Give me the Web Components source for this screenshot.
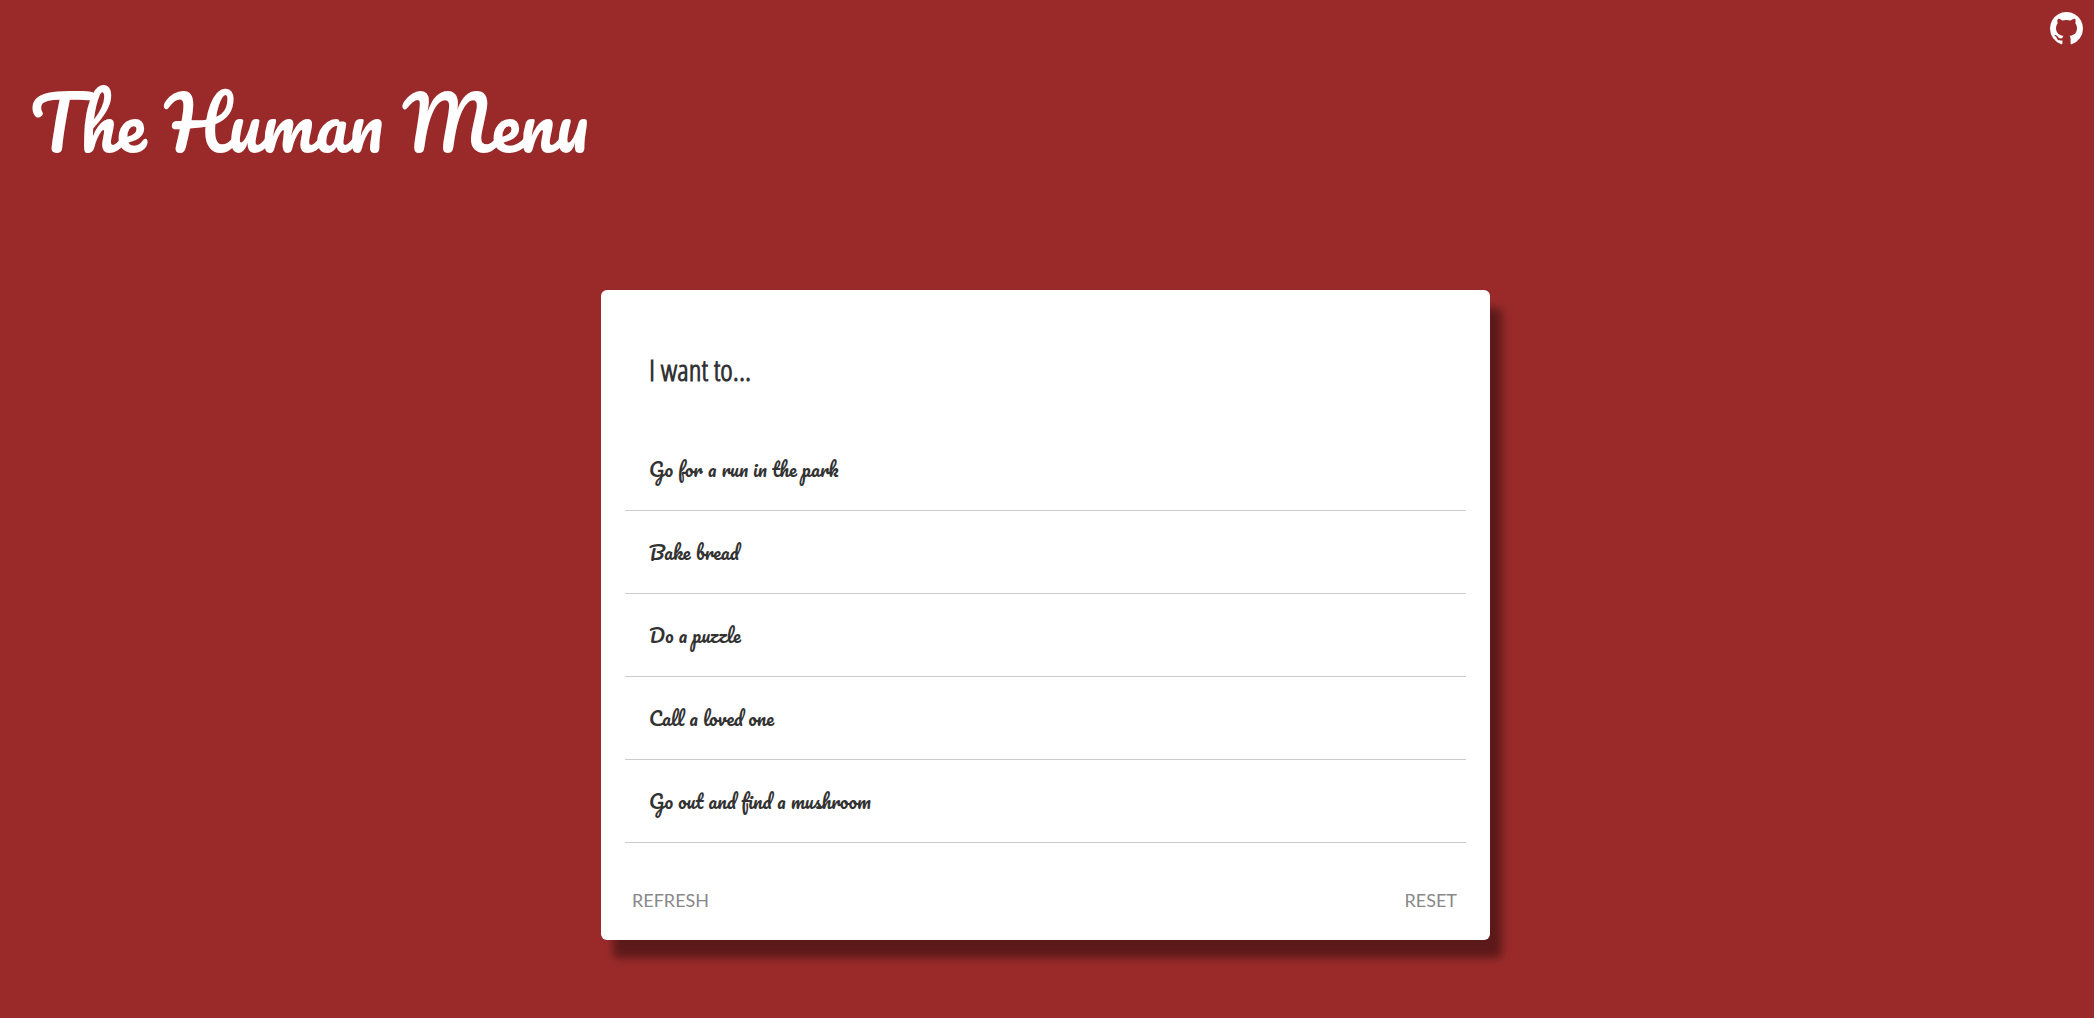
<!DOCTYPE html>
<html lang="en">
<head>
<meta charset="utf-8">
<title>The Human Menu</title>
<style>
  html { min-height: 100%; background: #9a2a2a; }
  body { margin: 0; color: #333; font-family: Lato, sans-serif; }
</style>
</head>
<body>
<human-menu-app></human-menu-app>
<script>
class HumanMenuApp extends HTMLElement {
  constructor() {
    super();
    this.attachShadow({ mode: 'open' }).innerHTML = `
      <style>
        :host { display: block; }
        main { display: flex; justify-content: center; padding: 112px 35px 78px 32px; }
        menu-card { flex: 0 1 889px; min-width: 0; }
      </style>
      <site-header>The Human Menu</site-header>
      <main>
        <menu-card>
          <span slot="title">I want to...</span>
          <menu-option>Go for a run in the park</menu-option>
          <menu-option>Bake bread</menu-option>
          <menu-option>Do a puzzle</menu-option>
          <menu-option>Call a loved one</menu-option>
          <menu-option>Go out and find a mushroom</menu-option>
          <text-button slot="actions">REFRESH</text-button>
          <text-button slot="actions">RESET</text-button>
        </menu-card>
      </main>`;
  }
}

class SiteHeader extends HTMLElement {
  constructor() {
    super();
    this.attachShadow({ mode: 'open' }).innerHTML = `
      <style>
        :host { display: block; color: #fff; }
        nav { display: flex; justify-content: flex-end; padding: 12px 11px 0; }
        a { display: block; color: inherit; }
        svg { display: block; width: 33px; height: 33px; fill: currentColor; }
        h1 { margin: 0; padding: 28px 30px 5px; font: 400 72px/100px Pacifico, cursive; }
      </style>
      <nav>
        <a href="#" aria-label="GitHub"><svg viewBox="0 0 1536 1536" aria-hidden="true"><path d="M768 0q209 0 385.500 103t279.500 279.500 103 385.500q0 251-146.500 451.500t-378.500 277.500q-27 5-40-7t-13-30q0-3 .5-76.500t.5-134.500q0-97-52-142 57-6 102.500-18t94-39 81-66.500 53-105 20.500-150.500q0-119-79-206 37-91-8-204-28-9-81 11t-92 44l-38 24q-93-26-192-26t-192 26q-16-11-42.500-27t-83.500-38.500-85-13.500q-45 113-8 204-79 87-79 206 0 85 20.500 150t52.500 105 80.500 67 94 39 102.500 18q-39 36-49 103-21 10-45 15t-57 5-65.500-21.500-55.500-62.500q-19-32-48.500-52t-49.500-24l-20-3q-21 0-29 4.500t-5 11.500 9 14 13 12l7 5q22 10 43.500 38t31.500 51l10 23q13 38 44 61.500t67 30 69.500 7 55.500-3.500l23-4q0 38 .5 88.500t.5 54.500q0 18-13 30t-40 7q-232-77-378.500-277.500t-146.500-451.500q0-209 103-385.500t279.500-279.500 385.500-103z"/></svg></a>
      </nav>
      <h1><slot></slot></h1>`;
  }
}

class MenuCard extends HTMLElement {
  constructor() {
    super();
    this.attachShadow({ mode: 'open' }).innerHTML = `
      <style>
        :host { display: block; box-sizing: border-box; padding: 24px; border-radius: 6px;
                background: #fff; box-shadow: 12px 18px 8px rgba(0, 0, 0, .4); }
        h2 { margin: 0; padding: 34px 24px 36px; font: 700 30px/44px "Open Sans Condensed Light", "Open Sans Condensed", sans-serif; }
        footer { display: flex; justify-content: space-between; padding: 41px 9px 0 7px; }
      </style>
      <h2><slot name="title"></slot></h2>
      <div role="list"><slot></slot></div>
      <footer><slot name="actions"></slot></footer>`;
  }
}

class MenuOption extends HTMLElement {
  constructor() {
    super();
    this.attachShadow({ mode: 'open' }).innerHTML = `
      <style>
        :host { display: block; padding: 24px; border-bottom: 1px solid #ccc;
                font: 400 19px/34px Pacifico, cursive; }
      </style>
      <slot></slot>`;
  }
  connectedCallback() { this.setAttribute('role', 'listitem'); }
}

class TextButton extends HTMLElement {
  constructor() {
    super();
    this.attachShadow({ mode: 'open' }).innerHTML = `
      <style>
        :host { display: block; }
        button { display: block; margin: 0; padding: 0; border: 0; background: none;
                 color: #888; font: 400 18px/32px Lato, sans-serif; cursor: pointer; }
      </style>
      <button type="button"><slot></slot></button>`;
  }
}

customElements.define('text-button', TextButton);
customElements.define('menu-option', MenuOption);
customElements.define('menu-card', MenuCard);
customElements.define('site-header', SiteHeader);
customElements.define('human-menu-app', HumanMenuApp);
</script>
</body>
</html>
